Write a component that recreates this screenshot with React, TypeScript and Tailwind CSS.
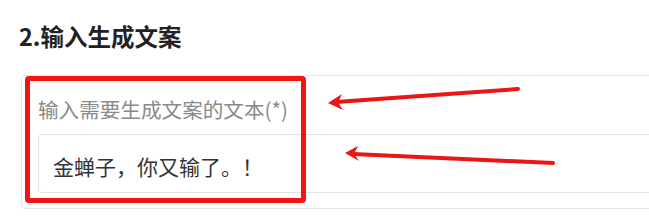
const App = () => {
  return (
    <div
      className="relative w-[649px] h-[221px] overflow-hidden bg-white"
      style={{ fontFamily: '"Noto Sans CJK SC", "Noto Sans", sans-serif' }}
    >
      {/* Section title */}
      <div className="pt-[21px] pl-[19px] text-[23.5px] leading-[30px] font-bold text-[#222]">
        2.输入生成文案
      </div>

      {/* Form card */}
      <div className="mt-[24px] ml-[21px] -mr-4 border border-[#e6e6e6] rounded-[4px] pt-[19px] pb-[15px] pl-[16px]">
        <div className="text-[20.6px] leading-[28px] text-[#8a8a8a]">输入需要生成文案的文本(*)</div>
        <div className="mt-[11px] h-[59px] border border-[#e3e3e3] rounded-[4px] pl-[14px] flex items-center">
          <span className="text-[21px] leading-[28px] text-[#333] pt-[4px]">金蝉子，你又输了。！</span>
        </div>
      </div>

      {/* Annotation box */}
      <div className="absolute left-[25px] top-[76px] w-[281px] h-[127px] border-[5px] border-[#f01414] rounded-[4px] pointer-events-none" />

      {/* Annotation arrows */}
      <svg className="absolute inset-0 pointer-events-none" width="649" height="221" viewBox="0 0 649 221">
        <g stroke="#ea1515" strokeWidth="4" strokeLinecap="round" fill="none">
          <line x1="518" y1="89" x2="336" y2="102" />
          <line x1="553" y1="163" x2="353" y2="154" />
        </g>
        <g fill="#ea1515">
          <polygon points="328,103 342,94 338,102.5 343,110" />
          <polygon points="345,153 358,146 354,154 359,161" />
        </g>
      </svg>
    </div>
  );
};

export default App;
